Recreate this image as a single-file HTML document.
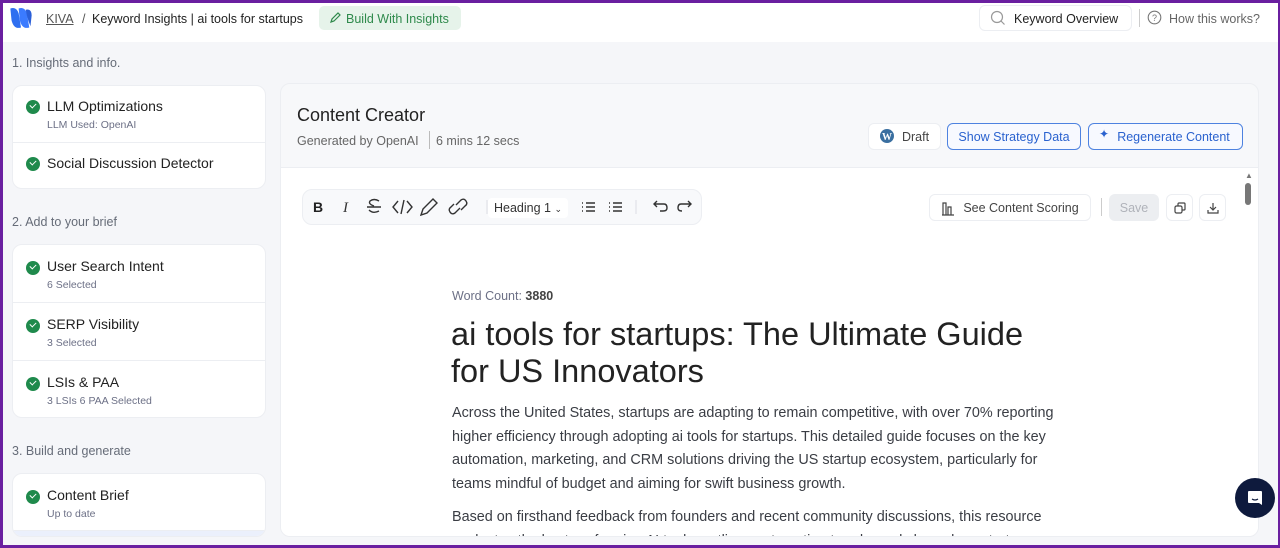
<!DOCTYPE html>
<html><head><meta charset="utf-8"><style>
*{box-sizing:border-box;margin:0;padding:0}
html,body{width:1280px;height:548px;overflow:hidden}
body{font-family:"Liberation Sans",sans-serif;background:#6a1fa0;position:relative}
.frame{position:absolute;left:3px;top:3px;width:1275px;height:542px;background:#f5f6f9;overflow:hidden}
.top{position:absolute;left:0;top:0;right:0;height:39px;background:#fff}
.abs{position:absolute;white-space:nowrap}
.sec{font-size:12.5px;color:#666c78}
.card{position:absolute;left:9px;width:254px;background:#fff;border:1px solid #eceef2;border-radius:10px;overflow:hidden}
.item{position:relative;border-bottom:1px solid #eceef2}
.item:last-child{border-bottom:none}
.item .t{position:absolute;left:34px;font-size:14px;color:#222}
.item .s{position:absolute;left:34px;font-size:10.5px;color:#6c7086}
.chk{position:absolute;left:13px;width:14px;height:14px;border-radius:50%;background:#1f8a4c}
.chk:after{content:"";position:absolute;left:4px;top:3px;width:5px;height:3px;border-left:1.6px solid #fff;border-bottom:1.6px solid #fff;transform:rotate(-45deg)}
.btn{position:absolute;height:27px;border-radius:6px;font-size:12.5px;display:flex;align-items:center;justify-content:center;background:#fff}
.blue{border:1px solid #4d82e0;color:#2a62cf;background:#f7f9ff}
p.body{font-size:14.4px;line-height:23.5px;color:#3a3d44}
</style></head><body>
<div class="frame">
 <div class="top">
  <svg class="abs" style="left:5px;top:3px" width="26" height="24" viewBox="0 0 22 20"><path d="M2 2 Q7 0 9 6 L11 18 Q5 20 3 12Z" fill="#2f6ff0"/><path d="M9 2 Q14 0 16 6 L18 18 Q12 20 10 12Z" fill="#3b7bff"/><path d="M15 3 Q20 2 20 8 L19 17 Q17 12 16 8Z" fill="#2a5fd8"/></svg>
  <div class="abs" style="left:43px;top:9px;font-size:12.5px;color:#555;text-decoration:underline">KIVA</div>
  <div class="abs" style="left:79px;top:9px;font-size:12.5px;color:#555">/</div>
  <div class="abs" style="left:89px;top:9px;font-size:12.5px;color:#222">Keyword Insights | ai tools for startups</div>
  <div class="abs" style="left:316px;top:3px;width:142px;height:24px;background:#e6f3ea;border-radius:5px;font-size:12.5px;color:#2f8a4c;padding:6px 0 0 27px">Build With Insights</div>
  <svg class="abs" style="left:326px;top:8px" width="13" height="13" viewBox="0 0 13 13"><path d="M2 11 L3 8 L9 2 L11 4 L5 10Z" fill="none" stroke="#2f8a4c" stroke-width="1.2"/></svg>
  <div class="abs" style="left:976px;top:2px;width:153px;height:26px;border:1px solid #eceef2;border-radius:6px;font-size:12.5px;color:#222;padding:6px 0 0 34px">Keyword Overview</div>
  <svg class="abs" style="left:987px;top:7px" width="16" height="16" viewBox="0 0 16 16"><circle cx="7" cy="7" r="5.5" fill="none" stroke="#999" stroke-width="1.2"/><path d="M11 11 L14.5 14.5" stroke="#999" stroke-width="1.2"/></svg>
  <div class="abs" style="left:1136px;top:6px;width:1px;height:18px;background:#ccc"></div>
  <svg class="abs" style="left:1144px;top:7px" width="15" height="15" viewBox="0 0 15 15"><circle cx="7.5" cy="7.5" r="6.3" fill="none" stroke="#777" stroke-width="1.1"/><text x="7.5" y="11" font-size="9" text-anchor="middle" fill="#777" font-family="Liberation Sans">?</text></svg>
  <div class="abs" style="left:1166px;top:9px;font-size:12.5px;color:#666">How this works?</div>
 </div>

 <div class="abs sec" style="left:9px;top:53px">1. Insights and info.</div>
 <div class="card" style="top:82px;height:104px">
  <div class="item" style="height:57px"><div class="chk" style="top:14px"></div><div class="t" style="top:12px">LLM Optimizations</div><div class="s" style="top:33px">LLM Used: OpenAI</div></div>
  <div class="item" style="height:47px"><div class="chk" style="top:14px"></div><div class="t" style="top:12px">Social Discussion Detector</div></div>
 </div>
 <div class="abs sec" style="left:9px;top:212px">2. Add to your brief</div>
 <div class="card" style="top:241px;height:174px">
  <div class="item" style="height:58px"><div class="chk" style="top:16px"></div><div class="t" style="top:13px">User Search Intent</div><div class="s" style="top:34px">6 Selected</div></div>
  <div class="item" style="height:58px"><div class="chk" style="top:16px"></div><div class="t" style="top:13px">SERP Visibility</div><div class="s" style="top:34px">3 Selected</div></div>
  <div class="item" style="height:58px"><div class="chk" style="top:16px"></div><div class="t" style="top:13px">LSIs &amp; PAA</div><div class="s" style="top:34px">3 LSIs 6 PAA Selected</div></div>
 </div>
 <div class="abs sec" style="left:9px;top:441px">3. Build and generate</div>
 <div class="card" style="top:470px;height:64px">
  <div class="item" style="height:57px"><div class="chk" style="top:16px"></div><div class="t" style="top:13px">Content Brief</div><div class="s" style="top:34px">Up to date</div></div>
  <div style="height:30px;background:#ebf0fc"></div>
 </div>

 <div class="abs" style="left:277px;top:80px;width:979px;height:454px;background:#f7f8fa;border:1px solid #eceef2;border-radius:10px;overflow:hidden">
  <div class="abs" style="left:16px;top:21px;font-size:18px;color:#222">Content Creator</div>
  <div class="abs" style="left:16px;top:50px;font-size:12.5px;color:#666">Generated by OpenAI</div>
  <div class="abs" style="left:148px;top:47px;width:1px;height:18px;background:#bbb"></div>
  <div class="abs" style="left:155px;top:50px;font-size:12.5px;color:#666">6 mins 12 secs</div>
  <div class="btn" style="left:587px;top:39px;width:73px;border:1px solid #eceef2;color:#444;padding-left:22px">Draft</div>
  <svg class="abs" style="left:598px;top:44px" width="16" height="16" viewBox="0 0 16 16"><circle cx="8" cy="8" r="7" fill="#3a6fa0"/><text x="8" y="12" font-size="10" font-weight="bold" text-anchor="middle" fill="#fff" font-family="Liberation Serif">W</text></svg>
  <div class="btn blue" style="left:666px;top:39px;width:134px">Show Strategy Data</div>
  <div class="btn blue" style="left:807px;top:39px;width:155px;padding-left:16px">Regenerate Content</div>
  <div class="abs" style="left:818px;top:43px;font-size:12px;color:#2a62cf">✦</div>
  <div class="abs" style="left:0;top:83px;width:979px;height:400px;background:#fff;border-top:1px solid #eceef2">
   <div class="abs" style="left:21px;top:21px;width:400px;height:36px;background:#f8f9fb;border:1px solid #eceef2;border-radius:10px"></div>
   <svg class="abs" style="left:30px;top:28px" width="400" height="22" viewBox="0 0 400 22" fill="none" stroke="#333" stroke-width="1.4">
    <text x="2" y="16" font-size="14" font-weight="bold" fill="#222" stroke="none" font-family="Liberation Sans">B</text>
    <text x="32" y="16" font-size="15" font-style="italic" fill="#333" stroke="none" font-family="Liberation Serif">I</text>
    <path d="M56 11 H70 M68 5 Q63 2 59 5 Q57 8 63 10 M58 14 Q62 18 68 15"/>
    <path d="M87 5 L82 11 L87 17 M96 5 L101 11 L96 17 M93 4 L90 18"/>
    <path d="M110 19 L112 13 L122 3 L126 7 L116 17Z M110 19 L116 17"/>
    <path d="M145 9 L150 4 Q153 2 155 5 Q157 8 154 10 L150 14 M149 12 L144 17 Q141 19 139 16 Q137 13 140 11 L143 8"/>
    <path d="M176 4 V18" stroke="#e3e5ea"/>
    <path d="M271 7 L272 7 M275 7 H284 M271 11 L272 11 M275 11 H284 M271 15 L272 15 M275 15 H284"/>
    <path d="M298 7 L299 7 M302 7 H311 M298 11 L299 11 M302 11 H311 M298 15 L299 15 M302 15 H311"/>
    <path d="M325 4 V18" stroke="#e3e5ea"/>
    <path d="M343 8 H353 Q356 8 356 12 Q356 15 352 15 H349 M346 5 L343 8 L346 11"/>
    <path d="M380 8 H370 Q367 8 367 12 Q367 15 371 15 M377 5 L380 8 L377 11"/>
   </svg>
   <div class="abs" style="left:207px;top:30px;width:80px;height:20px;background:#fff;border-radius:4px;font-size:12.5px;color:#333;padding:3px 0 0 6px">Heading 1 <span style="font-size:9px">⌄</span></div>
   <div class="btn" style="left:648px;top:26px;width:162px;border:1px solid #eceef2;color:#444;padding-left:22px">See Content Scoring</div>
   <svg class="abs" style="left:659px;top:32px" width="16" height="16" viewBox="0 0 16 16" fill="none" stroke="#444" stroke-width="1.2"><path d="M2 15 H14 M3 15 V3 H6 V15 M8 15 V7 H11 V15"/></svg>
   <div class="abs" style="left:820px;top:30px;width:1px;height:18px;background:#ccc"></div>
   <div class="btn" style="left:828px;top:26px;width:50px;background:#eceef1;color:#b0b3ba">Save</div>
   <div class="btn" style="left:885px;top:26px;width:27px;border:1px solid #eceef2"><svg width="14" height="14" viewBox="0 0 14 14" fill="none" stroke="#444" stroke-width="1.2"><rect x="2" y="5" width="7" height="7" rx="1.5"/><path d="M5 5 V3 Q5 2 6 2 H11 Q12 2 12 3 V8 Q12 9 11 9 H9"/></svg></div>
   <div class="btn" style="left:918px;top:26px;width:27px;border:1px solid #eceef2"><svg width="14" height="14" viewBox="0 0 14 14" fill="none" stroke="#444" stroke-width="1.2"><path d="M7 2 V9 M4 6 L7 9 L10 6 M2 9 V12 H12 V9"/></svg></div>
   <div class="abs" style="left:964px;top:3px;font-size:8px;color:#777">▲</div>
   <div class="abs" style="left:964px;top:15px;width:6px;height:22px;background:#777;border-radius:3px"></div>
   <div class="abs" style="left:171px;top:121px;font-size:12.5px;color:#6c7086">Word Count: <b style="color:#444">3880</b></div>
   <div class="abs" style="left:170px;top:148px;font-size:32.5px;line-height:37px;color:#222;white-space:normal;width:610px">ai tools for startups: The Ultimate Guide for US Innovators</div>
   <div class="abs" style="left:171px;top:234px;width:606px;white-space:normal">
    <p class="body">Across the United States, startups are adapting to remain competitive, with over 70% reporting higher efficiency through adopting ai tools for startups. This detailed guide focuses on the key automation, marketing, and CRM solutions driving the US startup ecosystem, particularly for teams mindful of budget and aiming for swift business growth.</p>
    <p class="body" style="margin-top:10px">Based on firsthand feedback from founders and recent community discussions, this resource evaluates the best-performing AI tools, outlines automation trends, and shows how startups are</p>
   </div>
  </div>
 </div>
 <div class="abs" style="left:1232px;top:475px;width:40px;height:40px;border-radius:50%;background:#0e1a3d"></div>
 <svg class="abs" style="left:1243px;top:486px" width="18" height="18" viewBox="0 0 18 18"><path d="M3 2 H15 Q16 2 16 3 V16 L13 14 H3 Q2 14 2 13 V3 Q2 2 3 2Z" fill="#fff"/><path d="M6 10 Q9 12 12 10" stroke="#0e1a3d" stroke-width="1.2" fill="none"/></svg>
</div>
</body></html>
